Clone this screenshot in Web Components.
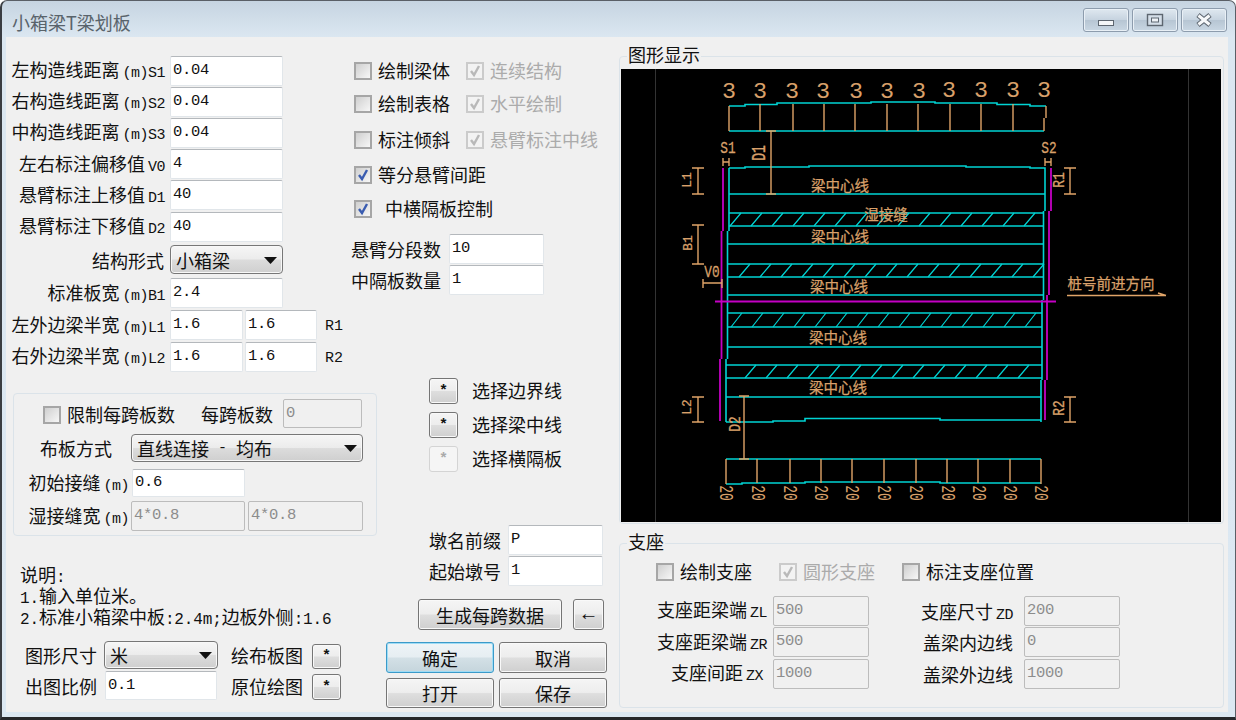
<!DOCTYPE html>
<html lang="zh">
<head>
<meta charset="utf-8">
<title>小箱梁T梁划板</title>
<style>
  html, body { margin: 0; padding: 0; background: #fff; }
</style>
</head>
<body>
<ui-window title="小箱梁T梁划板"><bridge-dialog></bridge-dialog></ui-window>

<script>
const define = (name, css, html, setup) => {
  customElements.define(name, class extends HTMLElement {
    connectedCallback() {
      if (this.shadowRoot) return;
      const root = this.attachShadow({ mode: 'open' });
      root.innerHTML = `<style>${css}</style>${html(this)}`;
      if (setup) setup(this, root);
    }
  });
};

define('ui-window', `
  :host {
    display: block; width: 1236px; height: 720px; box-sizing: border-box; overflow: hidden;
    border: 1px solid #5a5f66; border-left: 2px solid #3a3d42; border-bottom: 3px solid #26282b;
    border-radius: 7px 7px 0 0;
    background: linear-gradient(#c6d4e1, #dbe7f1 36px, #dce8f2);
    font: 18px "Noto Sans CJK SC", sans-serif; color: #111;
  }
  .bar { height: 36px; display: flex; align-items: flex-start; }
  .title { margin: 11px 0 0 10px; line-height: 20px; color: #59636b; font-size: 18px; flex: 1; }
  .cap {
    width: 46px; height: 24px; box-sizing: border-box; margin: 7px 3px 0 0; border: 1px solid #8d9cad; border-radius: 3px;
    background: linear-gradient(#dfe8f0, #c6d3df 50%, #b6c5d3 50%, #c9d7e3);
    box-shadow: inset 0 0 0 1px #e9f0f6; display: flex; align-items: center; justify-content: center;
  }
  .caps { display: flex; margin-right: 5px; }
  .body { margin: 0 7px 0 4px; height: 675px; background: #f0f0f0; overflow: hidden; }
`, host => `
  <div class="bar">
    <div class="title">${host.getAttribute('title')}</div>
    <div class="caps">
      <div class="cap"><svg width="18" height="14"><rect x="1.500" y="7.500" width="15" height="5" fill="#f4f6f8" stroke="#5d6670"/></svg></div>
      <div class="cap"><svg width="18" height="14"><rect x="1.500" y="1.500" width="15" height="11" fill="#d4dee8" stroke="#5d6670" stroke-width="1.400"/><rect x="5.500" y="5" width="7" height="4" fill="#eef2f6" stroke="#5d6670"/></svg></div>
      <div class="cap"><svg width="18" height="16"><path d="M3 3l12 10M15 3L3 13" fill="none" stroke="#5d6670" stroke-width="5"/><path d="M3.500 3.500l11 9M14.500 3.500l-11 9" stroke="#f6f8fa" stroke-width="3"/></svg></div>
    </div>
  </div>
  <div class="body"><slot></slot></div>
`);

define('ui-row', `
  :host { display: flex; align-items: center; height: var(--h, 31.2px); }
  .label { width: var(--lw, 164px); box-sizing: border-box; padding-right: var(--pr, 5px); text-align: right; white-space: nowrap; flex: none; line-height: 20px; }
`, () => `<div class="label"><slot name="label"></slot></div><slot></slot>`);

define('ui-input', `
  :host {
    display: flex; align-items: center; flex: none; box-sizing: border-box;
    width: var(--w, 113px); height: var(--ih, 30px); padding: 0 0 2px 2px;
    background: #fff; border: 1px solid #e1e6ea; border-top-color: #b4b8bc; border-radius: 2px;
    font: 15.500px "Liberation Mono", monospace; letter-spacing: -.3px; color: #111; white-space: pre;
  }
  :host([disabled]) { background: #f0f0f0; border-color: #bcbcbc; color: #8c8c8c; }
`, () => `<slot></slot>`);

define('ui-combo', `
  :host {
    display: flex; align-items: center; flex: none; box-sizing: border-box; position: relative;
    width: var(--w, 113px); height: var(--ih, 29px); padding-left: 5px;
    border: 1px solid #777; border-radius: 4px; white-space: pre;
    background: linear-gradient(#f6f6f6, #ececec 48%, #dcdcdc 52%, #cfcfcf);
    box-shadow: inset 0 0 0 1px #f8f8f8;
  }
  svg { position: absolute; right: 5px; top: 50%; margin-top: -3px; }
`, () => `<slot></slot><svg width="13" height="7"><path d="M0 0h13L6.500 7z" fill="#111"/></svg>`);

define('ui-check', `
  :host { display: inline-flex; align-items: center; flex: none; height: 20px; line-height: 20px; white-space: nowrap; }
  .box {
    width: 18px; height: 18px; box-sizing: border-box; flex: none; margin-top: 2px; margin-right: var(--gap, 6px);
    border: 2px solid #a6a6a6; background: linear-gradient(135deg, #cfcfcf, #f7f7f7);
  }
  svg { display: block; }
  :host([disabled]) { color: #ababab; }
  :host([disabled]) .box { border-color: #cbcbcb; background: #f3f3f3; }
`, host => {
  const off = host.hasAttribute('disabled');
  const tick = host.hasAttribute('checked')
    ? `<svg width="14" height="14"><path d="M3 7l3 4 5-9" fill="none" stroke="${off ? '#b9b9b9' : '#3a5cb0'}" stroke-width="2.400"/></svg>` : '';
  return `<div class="box">${tick}</div><slot></slot>`;
});

define('ui-button', `
  :host {
    display: flex; align-items: center; justify-content: center; flex: none; box-sizing: border-box;
    width: var(--w, 29px); height: var(--ih, 26px); border: 1px solid #757575; border-radius: 3px;
    background: linear-gradient(#f5f5f5, #ededed 48%, #dedede 52%, #cfcfcf);
    box-shadow: inset 0 0 0 1px #f9f9f9; line-height: 20px;
  }
  :host([primary]) { border-color: #3b9ac9; box-shadow: inset 0 0 0 1px #9fdcf5; background: linear-gradient(#eef4f7, #e6eef2 48%, #d3e0e6 52%, #c5d5dc); }
  :host([disabled]) { border-color: #d4d4d4; box-shadow: none; background: #f5f5f5; color: #aaa; }
`, () => `<slot></slot>`);

define('ui-group', `
  :host { display: block; box-sizing: border-box; position: relative; border: 1px solid #dbe3e9; border-radius: 4px; }
  .cap { position: absolute; left: 7px; top: -13px; padding: 0 1px 0 1px; background: #f0f0f0; line-height: 20px; }
`, host => (host.getAttribute('caption') ? `<div class="cap">${host.getAttribute('caption')}</div>` : '') + `<slot></slot>`);

// 画布直接用屏幕坐标，viewBox 偏移到画布左上角
const beamLines = [194, 213, 226, 244, 264, 277, 295, 313, 327, 347, 365, 378, 397];
const leftEdge = y => y < 231 ? 729 : y < 359 ? 727.5 : 726;
const rightEdge = y => y < 211 ? 1045 : y < 300 ? 1043.5 : y < 380 ? 1042 : 1041;
const hatchBands = [[213, 226, 730], [264, 277, 739], [313, 327, 731], [365, 378, 724]];
const colsTop = [760, 793, 824, 855, 887, 918, 950, 981, 1013];
const colsBottom = [757, 790, 821, 852, 884, 916, 947, 978, 1010];
const labelsTop = [729, 760, 792, 823, 856, 887, 919, 949, 981, 1013, 1044];
const labelsBottom = [725, 757, 789, 820, 851, 883, 915, 947, 978, 1009, 1040];

const vdim = (x, y1, y2, w = 6) =>
  `<path class="o" d="M${x} ${y1}V${y2}M${x - w} ${y1}H${x + w}M${x - w} ${y2}H${x + w}"/>`;
const rot = (x, y, t, sy = 1) => `<text class="dim" transform="translate(${x} ${y}) rotate(-90) scale(1 ${sy})">${t}</text>`;
const narrow = (x, y, t) => `<text class="dim big" transform="translate(${x} ${y}) scale(.8 1)">${t}</text>`;

const hatch = () => hatchBands.map(([top, bot, start]) => {
  let out = '';
  for (let x = start; x < 1040; x += 21) {
    if (x + 11 > 1044) break;
    if (x < leftEdge(top) - 1) continue;
    out += `M${x} ${bot}L${x + 11} ${top}`;
  }
  return `<path class="c thin" d="${out}"/>`;
}).join('');

define('cad-view', `
  :host { display: block; width: 600px; height: 453px; background: #000; }
  svg { display: block; }
  path { fill: none; }
  .c { stroke: #00d4d4; stroke-width: 1.600; }
  .thin { stroke-width: 1.200; }
  .o { stroke: #e0a468; stroke-width: 1.400; }
  .m { stroke: #c400c4; stroke-width: 1.800; }
  .g { stroke: #333; stroke-width: 1; }
  text { fill: #d9a06a; stroke: #d9a06a; stroke-width: .25; font-family: "Noto Sans CJK SC", sans-serif; font-size: 14.500px; text-anchor: middle; dominant-baseline: central; }
  .dim { font: 13px "Liberation Mono", monospace; text-anchor: middle; dominant-baseline: central; }
  .big { font-size: 16px; }
  .num { stroke: none; }
`, () => `
<svg width="600" height="453" viewBox="621 69 600 453">
  <path class="g" d="M655.500 69V522M1188.500 69V522"/>

  <path class="c" d="M729 106H745V104.500H777V103H871V102H935V103H997V104.500H1030V106H1046M729 131H1044"/>
  <path class="o" d="M729 106V131M1046 106V118M1044 118V131${colsTop.map(x => `M${x} 104V131`).join('')}"/>
  ${labelsTop.map((x, i) => `<text class="dim num" transform="translate(${x} ${i > 6 ? 91 : 92}) scale(1.800 1.700)">3</text>`).join('')}

  <path class="c" d="M729 168H745V167H809V166H966V167H1030V168H1045V211M1043.500 211V300M1042 300V380M1041 380V422M729 168V231M727.500 231V359M726 359V422M726 422H773V421H805V418.500H940V420H1041"/>
  <path class="c" d="${beamLines.map(y => `M${leftEdge(y)} ${y}H${rightEdge(y)}`).join('')}"/>
  ${hatch()}

  <path class="m" d="M723 168V231M721.500 231V359M720 359V421M1051 168V211M1049 211V295M1047 295V380M1045 380V420M715 301.500H1056"/>

  <path class="c" d="M726 459H1041M726 484H742V483H805V482H940V483H1041"/>
  <path class="o" d="M726 459V484M1041 459V484${colsBottom.map(x => `M${x} 459V483`).join('')}"/>
  ${labelsBottom.map(x => `<text class="dim num" transform="translate(${x} 493) rotate(90) scale(1 1.600)">20</text>`).join('')}

  ${vdim(771, 131, 194, 5)}${rot(760, 153, 'D1', 1.5)}
  ${vdim(698, 168, 194)}${rot(687, 180, 'L1')}
  ${vdim(698, 225, 264)}${rot(688, 243, 'B1')}
  ${vdim(698, 397, 422)}${rot(687, 407, 'L2')}
  ${vdim(744, 396, 459, 5)}${rot(736, 424, 'D2', 1.200)}
  ${vdim(1070, 168, 194)}${rot(1060, 180, 'R1', 1.300)}
  ${vdim(1070, 397, 422)}${rot(1060, 408, 'R2', 1.300)}
  <path class="o" d="M723 162H729M723 158V166M729 158V166M1045 162H1051M1045 158V166M1051 158V166"/>
  ${narrow(728, 149, 'S1')}${narrow(1049, 149, 'S2')}
  <path class="o" d="M703 283H722M703 279V288M722 279V288"/>
  ${narrow(712, 273, 'V0')}

  <text x="840" y="184">梁中心线</text>
  <text x="840" y="235">梁中心线</text>
  <text x="839" y="285">梁中心线</text>
  <text x="838" y="336">梁中心线</text>
  <text x="838" y="386">梁中心线</text>
  <text x="886" y="213">湿接缝</text>
  <text x="1111" y="282">桩号前进方向</text>
  <path class="o" d="M1067 295.500H1166M1158 293L1166 295.500"/>
</svg>`);

define('bridge-dialog', `
  :host { display: flex; width: 1222px; height: 675px; }
  i { font: normal 15px "Liberation Mono", monospace; letter-spacing: -.5px; margin-left: 3px; }
  .n { margin: 0; letter-spacing: 0; }
  .work { width: 606px; flex: none; }
  .top, .low { display: flex; }
  .top { height: 341px; }
  .fields { width: 344px; flex: none; padding-top: 18px; }
  .opts { flex: 1; padding: 23px 0 0 4px; }
  .opt { display: flex; }
  .opts ui-row { margin-left: -4px; --lw: 99px; --pr: 8px; }
  .tag { margin-left: 8px; font: 15px "Liberation Mono", monospace; padding-top: 3px; }
  .lowl { width: 372px; flex: none; }
  .lowl > ui-group { margin: 15px 0 0 7px; width: 364px; height: 143px; padding-top: 5px; }
  .line { display: flex; align-items: center; }
  .notes { margin: 30px 0 0 14px; font-family: "Liberation Sans", "Noto Sans CJK SC", sans-serif; }
  .notes div { height: 21px; line-height: 21px; white-space: nowrap; }
  .notes i { font-size: 16px; letter-spacing: -.15px; margin: 0; }
  .bottom { margin-top: 11px; --lw: 98px; --pr: 7px; --h: 29px; }
  .mid { margin-left: 13px; margin-right: 9px; }
  .lowm { flex: 1; }
  .pick { margin-left: 51px; height: 34px; display: flex; align-items: flex-start; }
  .pick span { margin-left: 14px; line-height: 24px; }
  .star { font: bold 15px "Liberation Mono", monospace; }
  .arrow { font-size: 20px; }
  .btns { display: flex; flex-wrap: wrap; gap: 5px; margin: 12px 0 0 8px; }
  .right { padding: 19px 0 0 7px; }
  .shown { width: 605px; height: 468px; padding: 12px 0 0 1px; }
  .seat { width: 605px; height: 165px; margin-top: 19px; }
  .seatchecks { padding: 17px 0 0 36px; display: flex; height: 33px; }
  .seatrow { margin-top: 0; --h: 31.500px; --lw: 153px; --pr: 6px; }
  .r { width: 155px; text-align: right; padding-right: 11px; box-sizing: border-box; white-space: nowrap; }
`, () => `
<div class="work">
  <div class="top">
    <div class="fields">
      <ui-row><span slot="label">左构造线距离<i>(m)S1</i></span><ui-input>0.04</ui-input></ui-row>
      <ui-row><span slot="label">右构造线距离<i>(m)S2</i></span><ui-input>0.04</ui-input></ui-row>
      <ui-row><span slot="label">中构造线距离<i>(m)S3</i></span><ui-input>0.04</ui-input></ui-row>
      <ui-row><span slot="label">左右标注偏移值<i>V0</i></span><ui-input>4</ui-input></ui-row>
      <ui-row><span slot="label">悬臂标注上移值<i>D1</i></span><ui-input>40</ui-input></ui-row>
      <ui-row><span slot="label">悬臂标注下移值<i>D2</i></span><ui-input>40</ui-input></ui-row>
      <ui-row style="margin-top:1px;--h:33.500px;--pr:6px"><span slot="label">结构形式</span><ui-combo>小箱梁</ui-combo></ui-row>
      <ui-row style="--h:33px"><span slot="label">标准板宽<i>(m)B1</i></span><ui-input>2.4</ui-input></ui-row>
      <ui-row style="--h:31.500px"><span slot="label">左外边梁半宽<i>(m)L1</i></span><ui-input style="--w:73px">1.6</ui-input><ui-input style="--w:72px;margin-left:2px">1.6</ui-input><span class="tag">R1</span></ui-row>
      <ui-row style="--h:31.500px"><span slot="label">右外边梁半宽<i>(m)L2</i></span><ui-input style="--w:73px">1.6</ui-input><ui-input style="--w:72px;margin-left:2px">1.6</ui-input><span class="tag">R2</span></ui-row>
    </div>
    <div class="opts">
      <div class="opt" style="height:33px"><ui-check style="width:112px">绘制梁体</ui-check><ui-check disabled checked>连续结构</ui-check></div>
      <div class="opt" style="height:36px"><ui-check style="width:112px">绘制表格</ui-check><ui-check disabled checked>水平绘制</ui-check></div>
      <div class="opt" style="height:35px"><ui-check style="width:112px">标注倾斜</ui-check><ui-check disabled checked>悬臂标注中线</ui-check></div>
      <div class="opt" style="height:34px"><ui-check checked>等分悬臂间距</ui-check></div>
      <div class="opt" style="height:35px"><ui-check checked style="--gap:13px">中横隔板控制</ui-check></div>
      <ui-row><span slot="label">悬臂分段数</span><ui-input style="--w:95px">10</ui-input></ui-row>
      <ui-row><span slot="label">中隔板数量</span><ui-input style="--w:95px">1</ui-input></ui-row>
    </div>
  </div>
  <div class="low">
    <div class="lowl">
      <ui-group>
        <div class="line" style="height:29px;padding-left:29px"><ui-check>限制每跨板数</ui-check><span style="margin:0 10px 0 26px">每跨板数</span><ui-input disabled style="--w:79px;--ih:29px">0</ui-input></div>
        <ui-row style="--lw:117px;--pr:19px;--h:28px;margin-top:6px"><span slot="label">布板方式</span><ui-combo style="--w:232px;--ih:28px">直线连接<i class="n"> - </i>均布</ui-combo></ui-row>
        <ui-row style="--lw:118px;--pr:3px;--h:28px;margin-top:7px"><span slot="label">初始接缝<i>(m)</i></span><ui-input style="--w:113px;--ih:28px">0.6</ui-input></ui-row>
        <ui-row style="--lw:117px;--pr:2px;--h:30px;margin-top:4px"><span slot="label">湿接缝宽<i>(m)</i></span><ui-input disabled style="--w:114px">4*0.8</ui-input><ui-input disabled style="--w:115px;margin-left:3px">4*0.8</ui-input></ui-row>
      </ui-group>
      <div class="notes">
        <div>说明<i>:</i></div>
        <div><i>1.</i>输入单位米。</div>
        <div><i>2.</i>标准小箱梁中板<i>:2.4m;</i>边板外侧<i>:1.6</i></div>
      </div>
      <div class="bottom">
        <ui-row><span slot="label">图形尺寸</span><ui-combo style="--w:114px;--ih:28px">米</ui-combo><span class="mid">绘布板图</span><ui-button style="--ih:25px;margin-top:3px"><b class="star">*</b></ui-button></ui-row>
        <ui-row style="--lw:99px;--pr:8px;margin-top:2px"><span slot="label">出图比例</span><ui-input style="--w:112px;--ih:29px">0.1</ui-input><span class="mid" style="margin-left:14px">原位绘图</span><ui-button style="margin-top:3px"><b class="star">*</b></ui-button></ui-row>
      </div>
    </div>
    <div class="lowm">
      <div class="pick"><ui-button><b class="star">*</b></ui-button><span>选择边界线</span></div>
      <div class="pick"><ui-button><b class="star">*</b></ui-button><span>选择梁中线</span></div>
      <div class="pick" style="height:78px"><ui-button disabled><b class="star">*</b></ui-button><span>选择横隔板</span></div>
      <ui-row style="--lw:130px;--pr:7px"><span slot="label">墩名前缀</span><ui-input style="--w:95px">P</ui-input></ui-row>
      <ui-row style="--lw:130px;--pr:7px"><span slot="label">起始墩号</span><ui-input style="--w:95px">1</ui-input></ui-row>
      <div class="line" style="margin:13px 0 0 40px"><ui-button style="--w:144px;--ih:31px">生成每跨数据</ui-button><ui-button style="--w:31px;--ih:31px;margin-left:11px"><b class="star arrow">←</b></ui-button></div>
      <div class="btns">
        <ui-button primary style="--w:108px;--ih:31px">确定</ui-button><ui-button style="--w:108px;--ih:31px">取消</ui-button>
        <ui-button style="--w:108px;--ih:30px">打开</ui-button><ui-button style="--w:108px;--ih:30px">保存</ui-button>
      </div>
    </div>
  </div>
</div>
<div class="right">
  <ui-group class="shown" caption="图形显示"><cad-view></cad-view></ui-group>
  <ui-group class="seat" caption="支座">
    <div class="seatchecks"><ui-check style="width:123px">绘制支座</ui-check><ui-check disabled checked style="width:123px">圆形支座</ui-check><ui-check>标注支座位置</ui-check></div>
    <ui-row class="seatrow" style="margin-top:1px"><span slot="label">支座距梁端<i>ZL</i></span><ui-input disabled style="--w:96px">500</ui-input><span class="r">支座尺寸<i>ZD</i></span><ui-input disabled style="--w:96px">200</ui-input></ui-row>
    <ui-row class="seatrow"><span slot="label">支座距梁端<i>ZR</i></span><ui-input disabled style="--w:96px">500</ui-input><span class="r">盖梁内边线</span><ui-input disabled style="--w:96px">0</ui-input></ui-row>
    <ui-row class="seatrow" style="--pr:10px"><span slot="label">支座间距<i>ZX</i></span><ui-input disabled style="--w:96px">1000</ui-input><span class="r">盖梁外边线</span><ui-input disabled style="--w:96px">1000</ui-input></ui-row>
  </ui-group>
</div>
`);
</script>
</body>
</html>
